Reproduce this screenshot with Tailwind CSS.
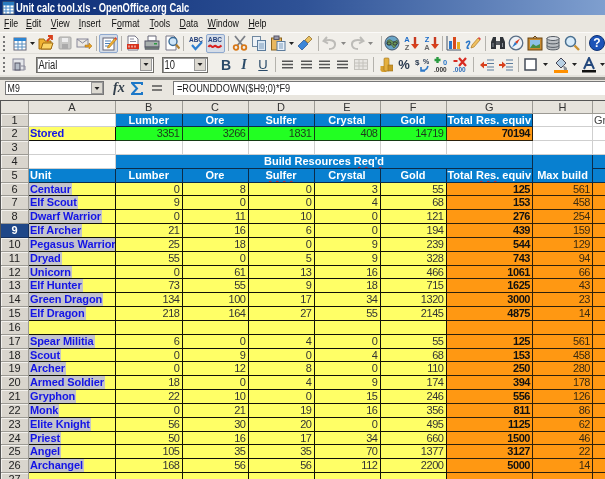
<!doctype html>
<html>
<head>
<meta charset="utf-8">
<title>Unit calc tool.xls - OpenOffice.org Calc</title>
<script src="https://cdn.jsdelivr.net/npm/@tailwindcss/browser@4"></script>
</head>
<body class="overflow-hidden">
<svg class="hidden">
  <symbol id="drop" viewBox="0 0 5 3"><path d="M0 0h5L2.5 3z" fill="#222"/></symbol>
  <symbol id="al" viewBox="0 0 12 9"><path d="M0 1h12M0 4.500h12M0 8h12" stroke="#555" stroke-width="1.600"/></symbol>
</svg>
<div class="w-[605px] h-[479px] overflow-hidden flex flex-col bg-[#e9e6df] font-['Liberation_Sans',sans-serif] blur-[0.45px]">

  <!-- title bar -->
  <div class="h-[15px] shrink-0 flex items-center bg-gradient-to-r from-[#0a2a74] via-[#2f5296] to-[#7f9fcf]">
    <svg class="w-[13px] h-[14px] ml-[2px] shrink-0" viewBox="0 0 13 14"><rect x="1" y="1" width="11" height="12" fill="#fff" stroke="#567"/><path d="M1 4h11M1 7h11M1 10h11M4 1v12M8 1v12" stroke="#48c"/><rect x="1" y="1" width="11" height="3" fill="#2a7ac0"/></svg>
    <span class="ml-[1px] text-[12px] font-bold text-white whitespace-nowrap origin-left scale-x-[0.78]">Unit calc tool.xls - OpenOffice.org Calc</span>
  </div>

  <!-- menu bar -->
  <div class="h-[17px] shrink-0 flex items-center pl-[5px] text-[11px] text-[#111] leading-none origin-left scale-x-[0.8]">
    <span class="w-[27.500px] shrink-0"><u>F</u>ile</span>
    <span class="w-[31px] shrink-0"><u>E</u>dit</span>
    <span class="w-[35px] shrink-0"><u>V</u>iew</span>
    <span class="w-[41px] shrink-0"><u>I</u>nsert</span>
    <span class="w-[47.500px] shrink-0">F<u>o</u>rmat</span>
    <span class="w-[37.500px] shrink-0"><u>T</u>ools</span>
    <span class="w-[35px] shrink-0"><u>D</u>ata</span>
    <span class="w-[51px] shrink-0"><u>W</u>indow</span>
    <span class="shrink-0"><u>H</u>elp</span>
  </div>

  <!-- standard toolbar -->
  <div class="h-[21px] shrink-0 flex items-center pl-[3px] bg-[#f1efea] border-t border-[#fbfaf8]">
    <div class="w-[3px] h-[15px] border-l-2 border-dotted border-[#777]"></div>
    <!-- new -->
    <svg class="w-4 h-4 ml-[6px] shrink-0" viewBox="0 0 16 16"><rect x="2" y="3" width="12" height="12" fill="#fff" stroke="#667"/><rect x="2" y="3" width="12" height="3" fill="#2c86d4"/><path d="M2 9h12M2 12h12M6 6v9M10 6v9" stroke="#5a90c0"/></svg>
    <svg class="w-[5px] h-[3px] ml-[2px] shrink-0"><use href="#drop"/></svg>
    <!-- open -->
    <svg class="w-4 h-4 ml-[3px] shrink-0" viewBox="0 0 16 16"><path d="M1 4h5l1 2h6v8H1z" fill="#f0b030" stroke="#a06a10"/><path d="M3 14l2-6h10l-2 6z" fill="#fbd468" stroke="#a06a10"/><path d="M9 6l5-5M10 1h4v4" stroke="#d8401c" stroke-width="1.800" fill="none"/></svg>
    <!-- save, disabled -->
    <svg class="w-4 h-4 ml-[3px] shrink-0" viewBox="0 0 16 16"><rect x="2" y="2" width="12" height="12" rx="1" fill="#c8c8c6" stroke="#a8a8a6"/><rect x="5" y="3" width="6" height="4" fill="#eee"/><rect x="5" y="9" width="6" height="5" fill="#aaa"/></svg>
    <!-- mail -->
    <svg class="w-4 h-4 ml-[3px] shrink-0" viewBox="0 0 16 16"><rect x="1" y="4" width="11" height="8" fill="#ece9e4" stroke="#889"/><path d="M1 4l5.500 4L12 4" fill="none" stroke="#889"/><path d="M9 10h4V8l3 3-3 3v-2H9z" fill="#e8a020" stroke="#a06a10" stroke-width=".5"/></svg>
    <div class="w-px h-[15px] bg-[#b4b2ac] ml-[4px]"></div>
    <!-- edit file, active -->
    <div class="w-[19px] h-[19px] ml-[3px] shrink-0 flex items-center justify-center bg-[#d5dde8] border border-[#8fa9cf] rounded-[2px]">
      <svg class="w-4 h-4" viewBox="0 0 16 16"><rect x="2" y="3" width="11" height="12" fill="#fff" stroke="#667"/><path d="M4 6h6M4 8.500h5M4 11h4" stroke="#4a7fb8"/><path d="M7 11l7-8 1.500 1.500-7 8-2 .5z" fill="#f0b030" stroke="#a06a10" stroke-width=".6"/><path d="M13.500 3.500l1-1.500 1.500 1.500-1 1.500z" fill="#d84040"/></svg>
    </div>
    <div class="w-px h-[15px] bg-[#b4b2ac] ml-[3px]"></div>
    <!-- pdf -->
    <svg class="w-4 h-4 ml-[3px] shrink-0" viewBox="0 0 16 16"><path d="M3 1h7l3 3v11H3z" fill="#fff" stroke="#778"/><path d="M5 4h4M5 6.500h6" stroke="#889"/><rect x="2" y="9" width="12" height="5" fill="#d8321c"/><path d="M4 10.500v2M7 10.500v2M10 10.500v2" stroke="#fff"/></svg>
    <!-- print -->
    <svg class="w-4 h-4 ml-[3px] shrink-0" viewBox="0 0 16 16"><path d="M4 1h8v5H4z" fill="#fff" stroke="#667"/><rect x="1" y="6" width="14" height="6" fill="#a8b0ae" stroke="#556"/><rect x="1" y="12" width="14" height="2.500" fill="#6c7674" stroke="#556" stroke-width=".5"/><rect x="10" y="8" width="3" height="1.500" fill="#2a9a40"/></svg>
    <!-- preview -->
    <svg class="w-4 h-4 ml-[4px] shrink-0" viewBox="0 0 16 16"><path d="M2 1h8l2 2v12H2z" fill="#fff" stroke="#778"/><circle cx="9" cy="6.500" r="4" fill="#cfe6f8" stroke="#3a6c98" stroke-width="1.400"/><path d="M12 9.500l3.500 4" stroke="#b08030" stroke-width="2.200"/></svg>
    <div class="w-px h-[15px] bg-[#b4b2ac] ml-[3px]"></div>
    <!-- spellcheck -->
    <svg class="w-4 h-4 ml-[4px] shrink-0" viewBox="0 0 16 16"><text x="8" y="7" text-anchor="middle" font-size="6.500" font-weight="700" fill="#24407c" font-family="Liberation Sans">ABC</text><path d="M4 10l3.500 4L14 7" fill="none" stroke="#2f7fd0" stroke-width="2.200"/></svg>
    <!-- auto spellcheck, active -->
    <div class="w-[19px] h-[19px] ml-[2px] shrink-0 flex items-center justify-center bg-[#d5dde8] border border-[#8fa9cf] rounded-[2px]">
      <svg class="w-4 h-4" viewBox="0 0 16 16"><text x="8" y="7" text-anchor="middle" font-size="6.500" font-weight="700" fill="#24407c" font-family="Liberation Sans">ABC</text><path d="M1.500 12c2-4 3 1 4.500 0s2-2 3.500-.5 3 1 5-1" fill="none" stroke="#d82020" stroke-width="2"/></svg>
    </div>
    <div class="w-px h-[15px] bg-[#b4b2ac] ml-[3px]"></div>
    <!-- cut -->
    <svg class="w-4 h-4 ml-[3px] shrink-0" viewBox="0 0 16 16"><path d="M3 1l8 10M13 1L5 11" stroke="#7c8088" stroke-width="1.800"/><circle cx="4" cy="12.500" r="2.300" fill="none" stroke="#d87818" stroke-width="1.800"/><circle cx="12" cy="12.500" r="2.300" fill="none" stroke="#d87818" stroke-width="1.800"/></svg>
    <!-- copy -->
    <svg class="w-4 h-4 ml-[3px] shrink-0" viewBox="0 0 16 16"><rect x="1.500" y="1.500" width="8" height="10" fill="#eef2f6" stroke="#7088a0"/><rect x="6.500" y="5.500" width="8" height="10" fill="#dbe7f2" stroke="#5c7c9c"/><path d="M8 9h5M8 11h5M8 13h5" stroke="#7c9cbc"/></svg>
    <!-- paste -->
    <svg class="w-4 h-4 ml-[3px] shrink-0" viewBox="0 0 16 16"><rect x="1.500" y="3" width="10" height="12" fill="#e8b860" stroke="#8a6420"/><rect x="4" y="1" width="5" height="3.500" fill="#99a" stroke="#556"/><rect x="7" y="6.500" width="8" height="9" fill="#e8f0f8" stroke="#5c7c9c"/><path d="M9 9h4M9 11h4M9 13h4" stroke="#7c9cbc"/></svg>
    <svg class="w-[5px] h-[3px] ml-[3px] shrink-0"><use href="#drop"/></svg>
    <!-- clone formatting -->
    <svg class="w-4 h-4 ml-[3px] shrink-0" viewBox="0 0 16 16"><path d="M1 11l6-6 4 4-6 6z" fill="#3c86d8" stroke="#24508c" stroke-width=".7"/><path d="M8 5l4-4 3 3-4 4z" fill="#e8c060" stroke="#8a6420" stroke-width=".7"/></svg>
    <div class="w-px h-[15px] bg-[#b4b2ac] ml-[5px]"></div>
    <!-- undo, disabled -->
    <svg class="w-4 h-4 ml-[4px] shrink-0" viewBox="0 0 16 16"><path d="M5 2L1.500 6 6 8.500M2.500 6c6-2 11-.5 10.500 4-.3 2.500-3 4-6 4" fill="none" stroke="#bdbcb8" stroke-width="2"/></svg>
    <svg class="w-[5px] h-[3px] ml-[3px] shrink-0 opacity-50"><use href="#drop"/></svg>
    <!-- redo, disabled -->
    <svg class="w-4 h-4 ml-[3px] shrink-0" viewBox="0 0 16 16"><path d="M11 2l3.500 4L10 8.500M13.500 6c-6-2-11-.5-10.500 4 .3 2.500 3 4 6 4" fill="none" stroke="#bdbcb8" stroke-width="2"/></svg>
    <svg class="w-[5px] h-[3px] ml-[3px] shrink-0 opacity-50"><use href="#drop"/></svg>
    <div class="w-px h-[15px] bg-[#b4b2ac] ml-[8px]"></div>
    <!-- navigator -->
    <svg class="w-4 h-4 ml-[2px] shrink-0" viewBox="0 0 16 16"><circle cx="8" cy="8" r="7" fill="#6aa6c8" stroke="#46566a"/><path d="M3 6c2-2 4-1 5 0s3 1 5-1l1 3c-2 1-2 4-4 5-2-1-1-3-3-3S4 10 3 9z" fill="#6c9a58" stroke="#3a4a3a" stroke-width=".6"/><rect x="3" y="7" width="4" height="3" rx="1.500" fill="none" stroke="#223" stroke-width=".8"/><rect x="9" y="7" width="4" height="3" rx="1.500" fill="none" stroke="#223" stroke-width=".8"/></svg>
    <!-- sort ascending -->
    <svg class="w-4 h-4 ml-[3px] shrink-0" viewBox="0 0 16 16"><text x="4" y="7" text-anchor="middle" font-size="7.500" font-weight="700" fill="#1c6cc8" font-family="Liberation Sans">A</text><text x="4" y="15" text-anchor="middle" font-size="7.500" font-weight="700" fill="#666" font-family="Liberation Sans">Z</text><path d="M12 2v8" stroke="#c83a20" stroke-width="2.400"/><path d="M8 9h8l-4 5z" fill="#d8401c"/></svg>
    <!-- sort descending -->
    <svg class="w-4 h-4 ml-[4px] shrink-0" viewBox="0 0 16 16"><text x="4" y="7" text-anchor="middle" font-size="7.500" font-weight="700" fill="#1c6cc8" font-family="Liberation Sans">Z</text><text x="4" y="15" text-anchor="middle" font-size="7.500" font-weight="700" fill="#666" font-family="Liberation Sans">A</text><path d="M12 2v8" stroke="#c83a20" stroke-width="2.400"/><path d="M8 9h8l-4 5z" fill="#d8401c"/></svg>
    <div class="w-px h-[15px] bg-[#b4b2ac] ml-[3px]"></div>
    <!-- chart -->
    <svg class="w-4 h-4 ml-[3px] shrink-0" viewBox="0 0 16 16"><path d="M1 1v14h14" fill="none" stroke="#46566a"/><rect x="3" y="6" width="3" height="8" fill="#2c78c8"/><rect x="7" y="2" width="3" height="12" fill="#d84a1c"/><rect x="11" y="7" width="3" height="7" fill="#e8b020"/></svg>
    <!-- draw functions -->
    <svg class="w-4 h-4 ml-[3px] shrink-0" viewBox="0 0 16 16"><path d="M1 8c2-3 5-2 3 1s-3 5 0 4" fill="none" stroke="#2c78c8" stroke-width="1.500"/><path d="M6 13l1-3 6-7 2 2-6 7z" fill="#f0c060" stroke="#a06a10" stroke-width=".6"/><path d="M13 3l1-1 2 2-1 1z" fill="#e04040"/></svg>
    <div class="w-px h-[15px] bg-[#b4b2ac] ml-[4px]"></div>
    <!-- find -->
    <svg class="w-4 h-4 ml-[5px] shrink-0" viewBox="0 0 16 16"><path d="M1 14V7l2-5h3v12zM15 14V7l-2-5h-3v12z" fill="#30343a"/><rect x="6" y="6" width="4" height="4" fill="#55595f"/><path d="M3 8v4M12.500 8v4" stroke="#8a9098"/></svg>
    <!-- navigator compass -->
    <svg class="w-4 h-4 ml-[2px] shrink-0" viewBox="0 0 16 16"><circle cx="8" cy="8" r="6.800" fill="#eef2f6" stroke="#5a6e86" stroke-width="1.300"/><path d="M12 3.500L7 7l2 2z" fill="#d83a20"/><path d="M4 12.500L7 7l2 2z" fill="#2c78c8"/></svg>
    <!-- gallery -->
    <svg class="w-4 h-4 ml-[3px] shrink-0" viewBox="0 0 16 16"><rect x="1" y="3" width="14" height="12" fill="#c88a30" stroke="#6a4410"/><rect x="3" y="5" width="10" height="8" fill="#8cc0e8"/><path d="M3 13l3-4 3 2 4-2v4z" fill="#4a8c40"/><path d="M6 3l2-2 2 2" fill="none" stroke="#6a4410"/></svg>
    <!-- data sources -->
    <svg class="w-4 h-4 ml-[2px] shrink-0" viewBox="0 0 16 16"><path d="M2 3v10c0 2.500 12 2.500 12 0V3z" fill="#b8bcc0" stroke="#555c64"/><ellipse cx="8" cy="3.500" rx="6" ry="2" fill="#dde0e4" stroke="#555c64"/><path d="M2 7c0 2.500 12 2.500 12 0M2 10.500c0 2.500 12 2.500 12 0" fill="none" stroke="#555c64"/></svg>
    <!-- zoom -->
    <svg class="w-4 h-4 ml-[3px] shrink-0" viewBox="0 0 16 16"><circle cx="6.500" cy="6.500" r="5" fill="#d8ecfa" stroke="#4a7090" stroke-width="1.500"/><path d="M10.500 10.500l4.500 4.500" stroke="#c89030" stroke-width="2.400"/></svg>
    <div class="w-px h-[15px] bg-[#b4b2ac] ml-[5px]"></div>
    <!-- help -->
    <div class="w-4 h-4 ml-[3px] shrink-0 rounded-full bg-[#1c54b8] border border-[#0e3274] text-white text-[12px] font-bold leading-[14px] text-center">?</div>
  </div>

  <!-- formatting toolbar -->
  <div class="h-[22px] shrink-0 flex items-center pl-[3px] bg-[#f1efea] border-t border-[#e0ded8]">
    <div class="w-[3px] h-[15px] border-l-2 border-dotted border-[#777]"></div>
    <!-- styles -->
    <svg class="w-[14px] h-[14px] ml-[6px] shrink-0" viewBox="0 0 14 14"><rect x="1" y="1" width="11" height="11" fill="#e4e6ea" stroke="#889"/><rect x="3" y="5" width="5" height="7" fill="#b4bcc8" stroke="#556"/><path d="M9 8h4v4" fill="none" stroke="#889"/></svg>
    <div class="w-[118px] h-[16px] ml-[10px] shrink-0 flex items-center bg-white border border-[#6f6e69] shadow-[inset_1px_1px_0_#999]">
      <span class="flex-1 pl-[2px] text-[12px] text-[#222] origin-left scale-x-[0.78]">Arial</span>
      <div class="w-[12px] h-[13px] mr-[1px] bg-[#dcd9d1] border border-[#999] flex items-center justify-center"><svg class="w-[6px] h-[3px]"><use href="#drop"/></svg></div>
    </div>
    <div class="w-[46px] h-[16px] ml-[8px] shrink-0 flex items-center bg-white border border-[#6f6e69] shadow-[inset_1px_1px_0_#999]">
      <span class="flex-1 pl-[2px] text-[12px] text-[#222] origin-left scale-x-[0.78]">10</span>
      <div class="w-[12px] h-[13px] mr-[1px] bg-[#dcd9d1] border border-[#999] flex items-center justify-center"><svg class="w-[6px] h-[3px]"><use href="#drop"/></svg></div>
    </div>
    <span class="w-[10px] ml-[13px] text-[14px] font-bold text-[#2a4a68] text-center leading-none shrink-0">B</span>
    <span class="w-[10px] ml-[8px] text-[14px] italic font-bold font-['Liberation_Serif',serif] text-[#2a4a68] text-center leading-none shrink-0">I</span>
    <span class="w-[10px] ml-[9px] text-[13px] underline text-[#2a4a68] text-center leading-none shrink-0">U</span>
    <div class="w-px h-[15px] bg-[#b4b2ac] ml-[7px]"></div>
    <!-- alignment -->
    <svg class="w-[11px] h-[9px] ml-[6px] shrink-0"><use href="#al"/></svg>
    <svg class="w-[11px] h-[9px] ml-[8px] shrink-0"><use href="#al"/></svg>
    <svg class="w-[11px] h-[9px] ml-[7px] shrink-0"><use href="#al"/></svg>
    <svg class="w-[11px] h-[9px] ml-[7px] shrink-0"><use href="#al"/></svg>
    <!-- merge, disabled -->
    <svg class="w-[14px] h-[11px] ml-[6px] shrink-0" viewBox="0 0 14 11"><rect x=".5" y=".5" width="13" height="10" fill="#e8e6e2" stroke="#c4c2bc"/><path d="M0 4h14M0 7h14M5 0v11M9 0v11" stroke="#c4c2bc"/></svg>
    <div class="w-px h-[15px] bg-[#b4b2ac] ml-[5px]"></div>
    <!-- currency -->
    <svg class="w-[13px] h-4 ml-[6px] shrink-0" viewBox="0 0 13 16"><ellipse cx="4" cy="13" rx="3.500" ry="2" fill="#d8a030"/><rect x=".5" y="9" width="7" height="4" fill="#d8a030"/><rect x="4" y="1" width="5" height="13" rx="1" fill="#e4b040" stroke="#9a7018" stroke-width=".6"/><rect x="8" y="8" width="5" height="6" fill="#cc9428" stroke="#9a7018" stroke-width=".6"/></svg>
    <!-- percent -->
    <span class="w-[12px] ml-[5px] text-[13px] font-bold text-[#2a3a50] text-center leading-none shrink-0">%</span>
    <!-- standard format -->
    <svg class="w-4 h-4 ml-[5px] shrink-0" viewBox="0 0 16 16"><text x="0" y="8" font-size="8" font-weight="700" fill="#2a3a50" font-family="Liberation Sans">$</text><text x="8" y="7" font-size="7" font-weight="700" fill="#2a3a50" font-family="Liberation Sans">%</text><path d="M13 9c-1 4-4 5-7 4M6 10v4h4" fill="none" stroke="#2c78c8" stroke-width="1.600"/></svg>
    <!-- add decimal -->
    <svg class="w-4 h-4 ml-[3px] shrink-0" viewBox="0 0 16 16"><path d="M3.500 0v6M.5 3h6" stroke="#2a9a40" stroke-width="2.400"/><text x="9" y="8" font-size="7.500" font-weight="700" fill="#2c78c8" font-family="Liberation Sans">0</text><text x="0" y="15" font-size="6.500" font-weight="700" fill="#333" font-family="Liberation Sans">.000</text></svg>
    <!-- delete decimal -->
    <svg class="w-4 h-4 ml-[3px] shrink-0" viewBox="0 0 16 16"><text x="0" y="15" font-size="6.500" font-weight="700" fill="#2c6cb8" font-family="Liberation Sans">.000</text><path d="M6 1l7 8M13 1L6 9" stroke="#d82a20" stroke-width="2.200"/><path d="M.5 4h4" stroke="#d82a20" stroke-width="2"/></svg>
    <div class="w-px h-[15px] bg-[#b4b2ac] ml-[4px]"></div>
    <!-- decrease indent -->
    <svg class="w-[14px] h-3 ml-[6px] shrink-0" viewBox="0 0 14 12"><path d="M7 1h7M7 4.500h7M7 8h7M7 11h7" stroke="#5c7c9c" stroke-width="1.200"/><path d="M0 6l4-3.500V5h3v2H4v2.500z" fill="#d8401c"/></svg>
    <!-- increase indent -->
    <svg class="w-[14px] h-3 ml-[5px] shrink-0" viewBox="0 0 14 12"><path d="M7 1h7M7 4.500h7M7 8h7M7 11h7" stroke="#5c7c9c" stroke-width="1.200"/><path d="M7 6L3 2.500V5H0v2h3v2.500z" fill="#d8401c"/></svg>
    <div class="w-px h-[15px] bg-[#b4b2ac] ml-[5px]"></div>
    <!-- borders -->
    <svg class="w-[13px] h-[13px] ml-[5px] shrink-0" viewBox="0 0 13 13"><rect x="1" y="1" width="11" height="11" fill="#fff" stroke="#444c58" stroke-width="1.500"/></svg>
    <svg class="w-[5px] h-[3px] ml-[6px] shrink-0"><use href="#drop"/></svg>
    <!-- background colour -->
    <svg class="w-[14px] h-4 ml-[6px] shrink-0" viewBox="0 0 14 16"><path d="M2 6l5-5 5 5-5 5z" fill="#b8d0e4" stroke="#445"/><path d="M9 8l4 3v2h-3z" fill="#8a9098"/><rect y="13" width="14" height="3" fill="#ff9000"/></svg>
    <svg class="w-[5px] h-[3px] ml-[4px] shrink-0"><use href="#drop"/></svg>
    <!-- font colour -->
    <svg class="w-[14px] h-4 ml-[5px] shrink-0" viewBox="0 0 14 16"><path d="M2 12L7 1l5 11M4 8h6" fill="none" stroke="#24487c" stroke-width="2"/><rect y="13" width="14" height="2.500" fill="#111"/></svg>
    <svg class="w-[5px] h-[3px] ml-[4px] shrink-0"><use href="#drop"/></svg>
  </div>

  <div class="h-[5px] shrink-0 bg-[#8f8e89] border-t-2 border-[#e4e2dc]"></div>

  <!-- formula bar -->
  <div class="h-[16px] shrink-0 flex items-center pl-[5px] bg-[#e9e6df]">
    <div class="w-[99px] h-[14px] shrink-0 flex items-center bg-white border border-[#777]">
      <span class="flex-1 pl-[2px] text-[11px] text-[#222] origin-left scale-x-[0.8]">M9</span>
      <div class="w-[12px] h-[12px] bg-[#dcd9d1] border border-[#999] flex items-center justify-center"><svg class="w-[6px] h-[3px]"><use href="#drop"/></svg></div>
    </div>
    <span class="w-[14px] ml-[9px] shrink-0 text-[14px] font-bold italic font-['Liberation_Serif',serif] text-[#33404c] leading-none">fx</span>
    <svg class="w-3 h-[13px] ml-[4px] shrink-0" viewBox="0 0 12 13"><path d="M11 3V1H1l5 5.500L1 12h10v-2" fill="none" stroke="#1c78c8" stroke-width="2"/></svg>
    <svg class="w-[10px] h-[6px] ml-[9px] shrink-0" viewBox="0 0 10 6"><path d="M0 1h10M0 5h10" stroke="#555" stroke-width="1.600"/></svg>
    <div class="flex-1 h-[14px] ml-[11px] flex items-center bg-white border-l border-t border-[#777] pl-[3px] text-[11.500px] text-[#222] whitespace-nowrap">
      <span class="origin-left scale-x-[0.8]">=ROUNDDOWN($H9;0)*F9</span>
    </div>
  </div>

  <div class="h-[4px] shrink-0 bg-[#e9e6df]"></div>

  <!-- sheet, filled in below -->
  <div id="sheet" class="grid grid-cols-[28px_87px_66.500px_66px_66px_66px_66px_86.500px_60px_66px] grid-rows-[12.500px_repeat(27,13.840px)] border-t border-l border-[#555] text-[11px] leading-[13px] min-h-0 overflow-hidden"></div>
</div>

<script>
  // cell classes, one per kind of cell
  const base = 'border-r border-b overflow-hidden whitespace-nowrap '
  const hdr = 'border-r border-b border-[#9c9a94] bg-[#e6e3dc] text-center text-[#333] overflow-hidden'
  const rowHdr = 'border-r border-b border-[#9c9a94] bg-[#d9d5cd] shadow-[inset_1px_1px_0_#f4f2ee] text-center text-[#222] overflow-hidden'
  const rowHdrActive = 'border-r border-b border-[#16305e] bg-[#1f4788] font-bold text-center text-white overflow-hidden'
  const white = base + 'border-[#cfcfcf] bg-white'
  const blue = base + 'border-[#0c2c48] bg-[#0880d0] text-white font-bold text-center'
  const blueLeft = base + 'border-[#0c2c48] bg-[#0880d0] text-white font-bold pl-[1px]'
  const yellow = base + 'border-[#111108] bg-[#ffff66] text-[#333] text-right pr-[2px] tracking-[-0.45px]'
  const yellowName = base + 'border-[#111108] bg-[#ffff66] text-[#1414e6] font-bold tracking-[-0.1px]'
  const green = base + 'border-[#143c14] bg-[#22ff22] text-[#1c3a1c] text-right pr-[2px] tracking-[-0.45px]'
  const orange = base + 'border-[#2c200c] bg-[#ff9812] text-[#3a2a10] text-right pr-[2px] tracking-[-0.45px]'
  const orangeBold = base + 'border-[#2c200c] bg-[#ff9812] text-[#111] font-bold text-right pr-[2px] tracking-[-0.45px]'
  const squiggle = 'underline decoration-wavy decoration-[#d82020] decoration-1'

  const sheet = document.getElementById('sheet')
  function cell(cls, html, extra) {
    const d = document.createElement('div')
    d.className = cls + (extra ? ' ' + extra : '')
    d.innerHTML = html === undefined ? '' : html
    sheet.appendChild(d)
  }

  const units = [
    ['Centaur', 0, 8, 0, 3, 55, 125, 561],
    ['Elf Scout', 9, 0, 0, 4, 68, 153, 458],
    ['Dwarf Warrior', 0, 11, 10, 0, 121, 276, 254],
    ['Elf Archer', 21, 16, 6, 0, 194, 439, 159],
    ['Pegasus Warrior', 25, 18, 0, 9, 239, 544, 129],
    ['Dryad', 55, 0, 5, 9, 328, 743, 94],
    ['Unicorn', 0, 61, 13, 16, 466, 1061, 66],
    ['Elf Hunter', 73, 55, 9, 18, 715, 1625, 43],
    ['Green Dragon', 134, 100, 17, 34, 1320, 3000, 23],
    ['Elf Dragon', 218, 164, 27, 55, 2145, 4875, 14],
    null,
    ['Spear Militia', 6, 0, 4, 0, 55, 125, 561],
    ['Scout', 0, 9, 0, 4, 68, 153, 458],
    ['Archer', 0, 12, 8, 0, 110, 250, 280],
    ['Armed Soldier', 18, 0, 4, 9, 174, 394, 178],
    ['Gryphon', 22, 10, 0, 15, 246, 556, 126],
    ['Monk', 0, 21, 19, 16, 356, 811, 86],
    ['Elite Knight', 56, 30, 20, 0, 495, 1125, 62],
    ['Priest', 50, 16, 17, 34, 660, 1500, 46],
    ['Angel', 105, 35, 35, 70, 1377, 3127, 22],
    ['Archangel', 168, 56, 56, 112, 2200, 5000, 14],
    null,
  ]

  const total = 'Total <span class="' + squiggle + '">Res.</span> equiv'
  const sulfer = '<span class="' + squiggle + '">Sulfer</span>'

  // column headers, the letter of I lies past the window edge
  cell(hdr, '')
  for (const c of 'ABCDEFGH') cell(hdr, c)
  cell(hdr, '')

  // row 1
  cell(rowHdr, '1'); cell(white)
  for (const t of ['Lumber', 'Ore', sulfer, 'Crystal', 'Gold', total]) cell(blue, t)
  cell(white); cell(white, 'Gr', 'text-[#444] pl-[1px]')

  // row 2
  cell(rowHdr, '2'); cell(yellowName, 'Stored', 'text-[#111] pl-[1px]')
  for (const n of [3351, 3266, 1831, 408, 14719]) cell(green, n)
  cell(orangeBold, 70194); cell(white); cell(white)

  // row 3
  cell(rowHdr, '3')
  for (let i = 0; i < 9; i++) cell(white)

  // rows 4 and 5, with the merged titles
  cell(rowHdr, '4'); cell(white)
  cell(blue, 'Build Resources <span class="' + squiggle + '">Req\'d</span>', 'col-span-6')
  cell(blue, '<span class="block pt-[14px]">Max build</span>', 'row-span-2')
  cell(blue)
  cell(rowHdr, '5'); cell(blueLeft, 'Unit')
  for (const t of ['Lumber', 'Ore', sulfer, 'Crystal', 'Gold', total]) cell(blue, t)
  cell(blue)

  // unit rows
  units.forEach((u, i) => {
    const row = i + 6
    cell(row === 9 ? rowHdrActive : rowHdr, row)
    if (!u) {
      for (let k = 0; k < 6; k++) cell(yellow)
      cell(orange); cell(orange); cell(orange)
      return
    }
    cell(yellowName, '<span class="inline-block h-full bg-[#c4c4ca] pl-[1px] pr-[1px]">' + u[0] + '</span>')
    for (let k = 1; k <= 5; k++) cell(yellow, u[k])
    cell(orangeBold, u[6])
    cell(orange, u[7])
    cell(orange)
  })
</script>
</body>
</html>
